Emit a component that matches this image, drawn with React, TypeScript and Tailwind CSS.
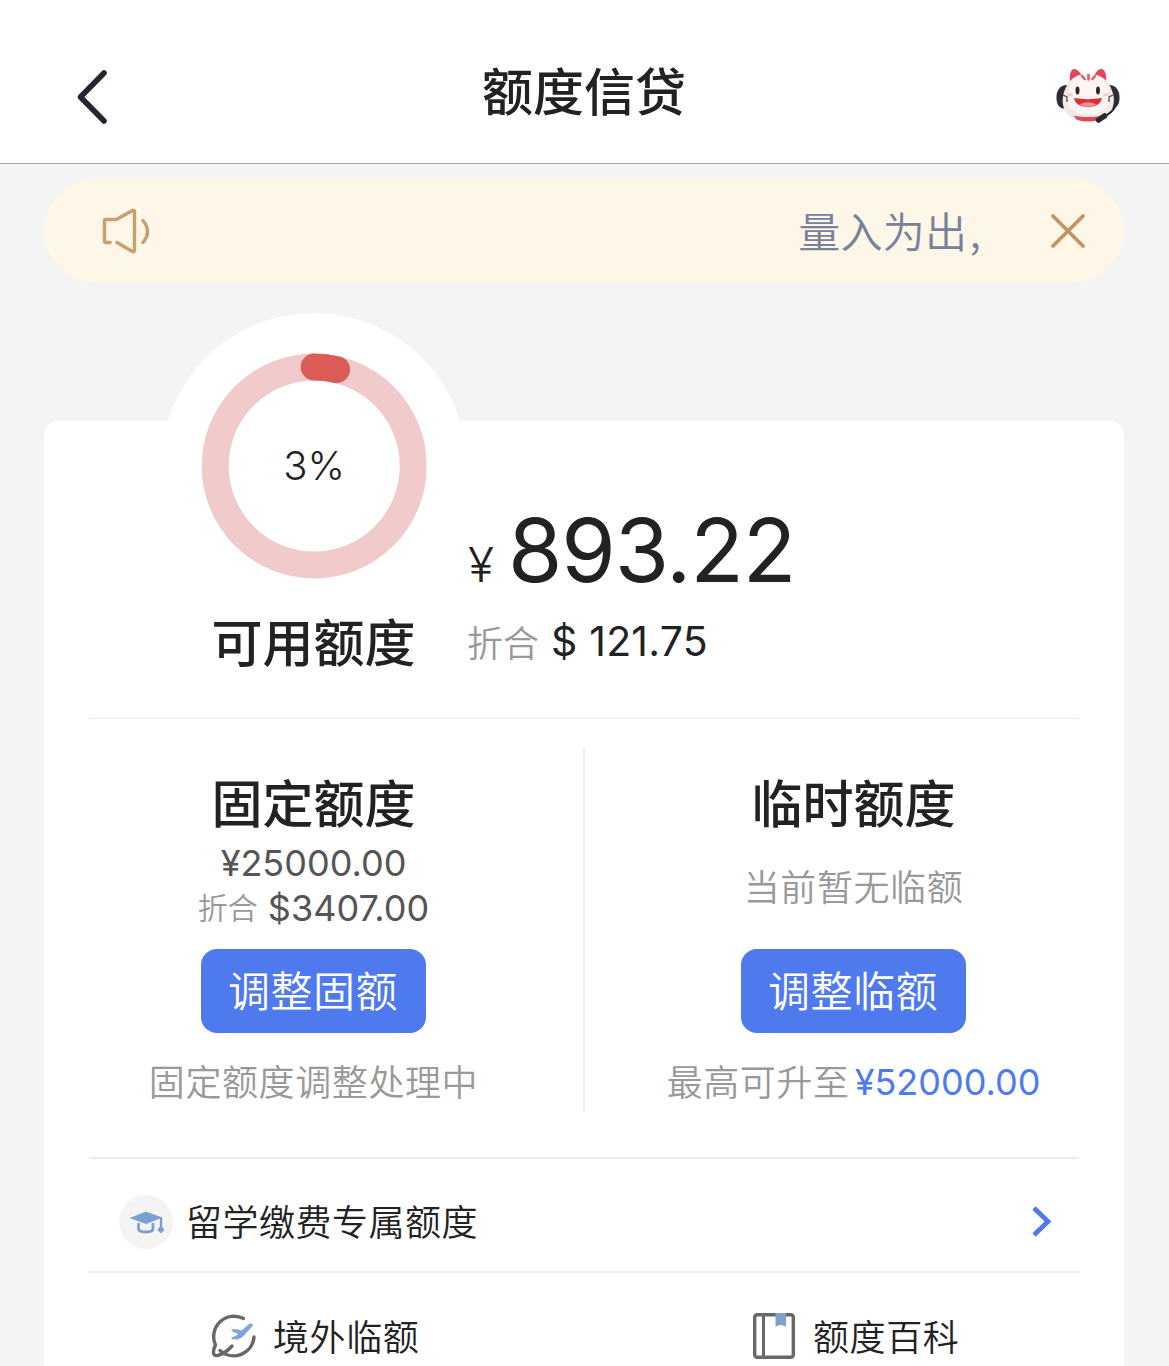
import type { ReactNode } from 'react';

const RING_RADIUS = 99;
const RING_LENGTH = 2 * Math.PI * RING_RADIUS;

function BackIcon() {
  return (
    <svg className="w-[34px] h-[58px]" viewBox="0 0 34 58" fill="none">
      <path d="M29 5L5.500 29L29 53" stroke="#25242f" strokeWidth="5.6" strokeLinecap="round" strokeLinejoin="round" />
    </svg>
  );
}

function MascotIcon() {
  return (
    <svg className="w-[66px] h-[58px]" viewBox="0 0 66 58">
      {/* headphones */}
      <path d="M12 19C4 19 1 26 1.500 33C2 40 5 43 13 43Z" fill="#2f2d33" />
      <path d="M54 19C62 19 65 26 64.500 33C64 40 61 43 53 43Z" fill="#2f2d33" />
      {/* ears and head */}
      <path d="M15 16C14 9 16 3 19 3C22 3 25 6 28 11Z" fill="#e0475a" />
      <path d="M51 16C52 9 50 3 46 3C43 3 41 6 38 11Z" fill="#e0475a" />
      <path d="M33 7.500C45 7.500 54 14 57.500 26C60 33 59 40 55.500 46C51 53 44 55 33 55C22 55 15 53 11 46C7 40 7 33 9 26C13 14 21 7.500 33 7.500Z" fill="#f5e9e6" />
      <path d="M33 8C44 8 51 14 54 26C57 38 51 49 33 49C16 49 10 38 13 26C16 14 22 8 33 8Z" fill="#fcf5f3" />
      <path d="M19 49.500C28 51.500 38 51.500 47 49.500C45 54 41 55.500 33 55.500C25 55.500 20 54 19 49.500Z" fill="#dd4a5b" />
      <path d="M27 10L29.500 13M33.500 9V13.500M40 10L37.500 13" stroke="#e4606e" strokeWidth="2.600" strokeLinecap="round" />
      <ellipse cx="22.500" cy="24.500" rx="2" ry="4" fill="#29272b" />
      <ellipse cx="43" cy="24.500" rx="2" ry="4" fill="#29272b" />
      <ellipse cx="15" cy="28.500" rx="3" ry="1.500" fill="#f6cfd0" />
      <ellipse cx="51" cy="28.500" rx="3" ry="1.500" fill="#f6cfd0" />
      <path d="M19 32C28 33.500 38 33.500 47 32C46 38 40 41 33 41C26 41 20 38 19 32Z" fill="#df2f36" />
      <path d="M25 38.500C29 35.500 37 35.500 41 38.500C37 41.500 29 41.500 25 38.500Z" fill="#f0928f" />
      <path d="M8 29L12 31V36M58 29L54 31V36" stroke="#4b494f" strokeWidth="1.300" fill="none" />
      <path d="M60 41C58 45 54 48 49 51" stroke="#29282c" strokeWidth="2" fill="none" />
      <path d="M49.500 50L43.500 54" stroke="#29282c" strokeWidth="5.500" strokeLinecap="round" />
    </svg>
  );
}

function SpeakerIcon() {
  return (
    <svg
      className="w-[52px] h-[48px]"
      viewBox="0 0 52 48"
      fill="none"
      stroke="#c6a070"
      strokeWidth="3.4"
      strokeLinecap="round"
      strokeLinejoin="round"
    >
      <path d="M9 35.500H5Q3.500 35.500 3.500 34V14Q3.500 12.500 5 12.500H15.500L31.500 3.500Q33.500 3 33.500 4.500V43.500Q33.500 45 31.500 44.500L16 35.500" />
      <path d="M42 13.500Q51 24.500 42 35.500" />
    </svg>
  );
}

function CloseIcon() {
  return (
    <svg className="w-[38px] h-[38px]" viewBox="0 0 38 38" fill="none">
      <path d="M4 4L34 34M34 4L4 34" stroke="#bf9564" strokeWidth="3.800" strokeLinecap="round" />
    </svg>
  );
}

function GraduationIcon() {
  return (
    <svg className="w-[54px] h-[54px]" viewBox="0 0 54 54" fill="none">
      <circle cx="27" cy="27" r="27" fill="#f4f4f4" />
      <path d="M10.500 23L26 17Q27 16.700 28 17L43.500 22.500L28.500 28.500Q27 29 25.500 28.500Z" fill="#7ba0d0" />
      <path d="M19.500 28V33.500Q19.500 37 27 37Q34 37 34 33.500V28" stroke="#7ba0d0" strokeWidth="2.800" />
      <path d="M42 23V34" stroke="#7ba0d0" strokeWidth="2.400" />
      <path d="M42 30.500L45.500 34.700L42 38.500L38.300 34.700Z" fill="#7ba0d0" />
    </svg>
  );
}

function OverseasIcon() {
  return (
    <svg className="w-[46px] h-[46px]" viewBox="0 0 46 46" fill="none">
      <path
        d="M32.500 5.500A20.400 20.400 0 0 0 4.500 32C1.500 38 1.500 43.500 6.500 42.500C11 41.500 17 37.500 21 33M9 37.500A20.400 20.400 0 0 0 43 24"
        stroke="#68686a"
        strokeWidth="3.400"
        strokeLinecap="round"
        strokeLinejoin="round"
      />
      <path
        d="M21.500 17.300H26L30.500 18.800L38 12.500Q40 10.800 40.800 12.300L31.500 22.500L26.500 25.500L21.500 25.200L26 23.500L29 20.500L25.500 19Z"
        fill="#7fa5d9"
        stroke="#7fa5d9"
        strokeWidth="2.200"
        strokeLinecap="round"
        strokeLinejoin="round"
      />
    </svg>
  );
}

function BookIcon() {
  return (
    <svg className="w-[42px] h-[46px]" viewBox="0 0 42 46" fill="none">
      <rect x="1.700" y="1.700" width="38.600" height="42.600" rx="2.500" stroke="#68686a" strokeWidth="3.400" />
      <path d="M10.500 2V44" stroke="#68686a" strokeWidth="3" />
      <path d="M22.500 0H33V13.500L27.700 11.800L22.500 13.500Z" fill="#7ea0cf" />
    </svg>
  );
}

function UsageRing({ percent }: { percent: number }) {
  return (
    <div className="relative w-[306px] h-[306px] rounded-full bg-white flex items-center justify-center">
      <svg className="absolute inset-0 w-full h-full" viewBox="0 0 306 306" fill="none">
        <g transform="translate(153.200 153) rotate(-90)">
          <circle r={RING_RADIUS} stroke="#f1cbcb" strokeWidth="27" />
          <circle
            r={RING_RADIUS}
            stroke="#dc5b57"
            strokeWidth="27"
            strokeLinecap="round"
            strokeDasharray={`${(RING_LENGTH * percent) / 100 + 4} ${RING_LENGTH}`}
          />
        </g>
      </svg>
      <span className="relative text-[40px] leading-none font-[360]">{percent}%</span>
    </div>
  );
}

function AdjustButton({ children }: { children: ReactNode }) {
  return (
    <button className="w-[225px] h-[84px] pr-px rounded-[16px] bg-[#4e7aee] text-white text-[42px] leading-[86px] tracking-[0.5px] font-[350]">
      {children}
    </button>
  );
}

export default function App() {
  return (
    <div className="w-[1169px] h-[1366px] overflow-hidden bg-[#f4f4f4] text-[#222] font-['Inter','Noto_Sans_CJK_SC',sans-serif]">
      {/* Title bar */}
      <header className="h-[164px] bg-white border-b border-[#a3a5a6] grid grid-cols-3 items-center pl-[75px] pr-[48px] pt-[22px]">
        <div className="pt-[8px]">
          <BackIcon />
        </div>
        <h1 className="mr-[28px] pt-px text-center text-[51px] leading-[60px] font-medium">额度信贷</h1>
        <div className="flex justify-end pt-[4px]">
          <MascotIcon />
        </div>
      </header>

      {/* Scrolling notice */}
      <div className="mt-[14px] mx-[44px] w-[1080px] h-[105px] rounded-full bg-[#fef7e8] flex items-center pl-[57px] pr-[37px] pt-[1px]">
        <SpeakerIcon />
        <p className="ml-auto pb-[3px] text-[42px] leading-[60px] tracking-[0.3px] text-[#78829a] font-[350] font-['Noto_Sans_CJK_SC',sans-serif]">
          量入为出<span className="ml-[2px]">,</span>
        </p>
        <div className="ml-[68px]">
          <CloseIcon />
        </div>
      </div>

      <main className="mt-[138px] mx-[44px] w-[1080px] h-[960px] rounded-t-[14px] bg-white px-[45px]">
        {/* Available limit */}
        <section className="h-[298px] flex border-b border-[#ececec]">
          <div className="ml-[72px] -mt-[108px] w-[306px] flex flex-col items-center">
            <UsageRing percent={3} />
            <h2 className="-mt-[5px] pr-px text-[51px] leading-[60px] font-medium">可用额度</h2>
          </div>
          <div className="pt-[84px]">
            <div className="h-[90px] flex items-baseline leading-[90px]">
              <span className="ml-px text-[48px] font-[350]">¥</span>
              <span className="ml-[14px] text-[88px] tracking-[-1.100px] font-[380]">893.22</span>
            </div>
            <div className="mt-[18px] h-[56px] flex items-baseline leading-[56px]">
              <span className="relative top-px text-[36px] text-[#999] font-[350]">折合</span>
              <span className="ml-[12px] text-[41px] tracking-[0.2px] font-[380]">$ 121.75</span>
            </div>
          </div>
        </section>

        {/* Fixed and temporary limits */}
        <section className="h-[440px] pt-[29px] flex border-b-2 border-[#eee]">
          <div className="w-[496px] h-[364px] border-r-2 border-[#ececec] flex flex-col items-center pr-[45px]">
            <h2 className="mt-[27px] text-[51px] leading-[60px] font-medium">固定额度</h2>
            <p className="mt-[5px] h-[46px] text-[36px] leading-[46px] text-[#555] font-[380]">¥25000.00</p>
            <p className="h-[45px] flex items-center text-[36px] leading-[45px] text-[#555] font-[380]">
              <span className="text-[30px] text-[#999] font-[350]">折合</span>
              <span className="ml-[10px]">$3407.00</span>
            </p>
            <div className="mt-[18px]">
              <AdjustButton>调整固额</AdjustButton>
            </div>
            <p className="mt-[23px] text-[36px] leading-[54px] tracking-[0.6px] text-[#999] font-[350]">固定额度调整处理中</p>
          </div>
          <div className="flex-1 flex flex-col items-center pl-[43px]">
            <h2 className="mt-[27px] text-[51px] leading-[60px] font-medium">临时额度</h2>
            <p className="mt-[26px] text-[36px] leading-[54px] tracking-[0.6px] text-[#999] font-[350]">当前暂无临额</p>
            <div className="mt-[34px]">
              <AdjustButton>调整临额</AdjustButton>
            </div>
            <p className="mt-[23px] flex items-center text-[36px] leading-[54px] tracking-[0.6px] text-[#999] font-[350] whitespace-nowrap">
              最高可升至
              <span className="ml-[5px] -mt-[3px] tracking-normal text-[#4e7aee] font-[380]">¥52000.00</span>
            </p>
          </div>
        </section>

        {/* Tuition limit */}
        <a className="h-[114px] pl-[30px] pr-[27px] pt-[14px] flex items-center border-b-2 border-[#eee]">
          <GraduationIcon />
          <span className="ml-[13px] pt-[2px] text-[36px] leading-[54px] tracking-[0.5px] font-[350]">留学缴费专属额度</span>
          <svg className="ml-auto w-[20px] h-[32px]" viewBox="0 0 20 32" fill="none">
            <path d="M2 2L16 15.500L2 29" stroke="#4e7aee" strokeWidth="4.800" />
          </svg>
        </a>

        <nav className="pt-[36px] flex">
          <a className="w-[540px] pl-[122px] flex items-center">
            <OverseasIcon />
            <span className="ml-[16px] pt-[2px] -mb-[2px] text-[36px] leading-[54px] tracking-[0.6px] font-[350]">境外临额</span>
          </a>
          <a className="pl-[124px] flex items-center">
            <BookIcon />
            <span className="ml-[18px] pt-[2px] -mb-[2px] text-[36px] leading-[54px] tracking-[0.6px] font-[350]">额度百科</span>
          </a>
        </nav>
      </main>
    </div>
  );
}
